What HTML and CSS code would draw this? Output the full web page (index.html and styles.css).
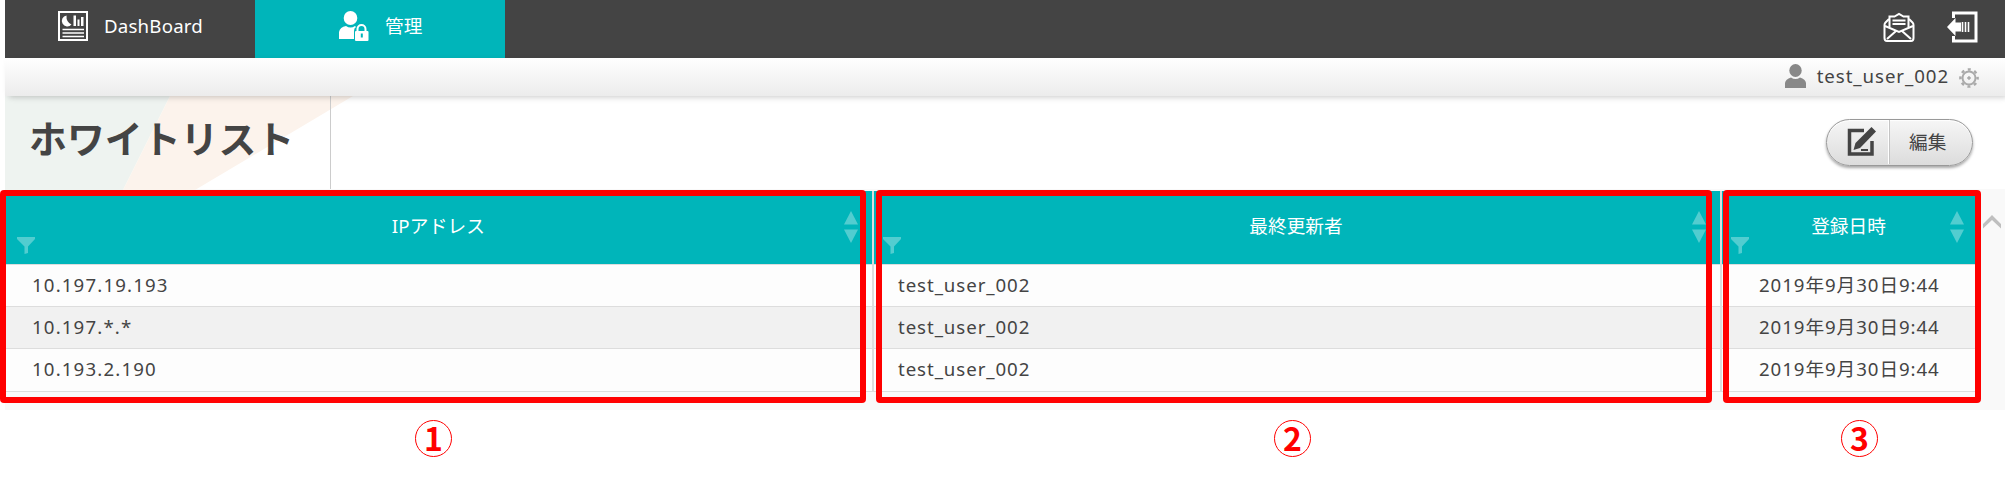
FILE: index.html
```
<!DOCTYPE html>
<html lang="ja">
<head>
<meta charset="utf-8">
<title>ホワイトリスト</title>
<link rel="stylesheet" href="styles.css">
</head>
<body>
<svg class="defs" width="0" height="0">
  <symbol id="funnel" viewBox="0 0 18 18"><path d="M0 0H18V2L11 9.500V16L7.500 17V9.500L0 2Z"/></symbol>
  <symbol id="sort" viewBox="0 0 14 32"><path d="M7 0L14 13.500H0ZM0 18.500H14L7 32Z"/></symbol>
</svg>
<div class="app">
  <header class="topbar">
    <nav class="nav">
      <a class="tab">
        <svg class="tab-icon" viewBox="0 0 30 30"><rect x="1" y="1" width="28" height="28" fill="none" stroke="#fff" stroke-width="2"/><path d="M8.500 4.500A5.500 5.500 0 1 0 13.500 13.500Q8 11 8.500 4.500ZM15.500 4.500h2.500v10.500h-2.500zM19.500 8.500h2v6.500h-2zM23 6h2.500v9h-2.500z" fill="#fff"/><path d="M4.500 18.500H26M4.500 22H26M4.500 25.500H26" stroke="#fff" stroke-width="1.600"/></svg>
        <span class="dash">DashBoard</span>
      </a>
      <a class="tab active">
        <svg class="tab-icon" viewBox="0 0 30 30" fill="#fff"><ellipse cx="11.500" cy="7" rx="6.800" ry="7"/><path d="M0 28V21Q1 16 7 15Q11.500 18 16 15L17 16Q15 17 15 20V28Z"/><path d="M18.500 21V18a4 4 0 0 1 8 0V21" fill="none" stroke="#fff" stroke-width="2"/><rect x="16" y="20" width="13.500" height="10" rx="1"/><rect x="21.800" y="22.500" width="2" height="4" fill="#00b5ba"/></svg>
        <span>管理</span>
      </a>
    </nav>
    <div class="actions">
      <svg width="32" height="31" viewBox="0 0 32 31" fill="none" stroke="#fff" stroke-width="2"><path d="M6 8L2.500 11.500Q1.500 12.500 1.500 14V27Q1.500 30 4 30H28Q30.500 30 30.500 27V14Q30.500 12.500 29.500 11.500L26 8"/><path d="M6.500 16V5.500H11.500L16 3L20.500 5.500H25.500V16"/><path d="M9.500 9.500H22.500M9.500 13H22.500" stroke-width="1.800"/><path d="M2 15L16 21L30 15M4 28L13 20M28 28L19 20"/></svg>
      <svg width="31" height="32" viewBox="0 0 31 32" fill="none" stroke="#fff"><path d="M6.500 7V2H29V30H6.500V25" stroke-width="3"/><path d="M0 16L8.500 7V11.500H14V20.500H8.500V25Z" fill="#fff" stroke="none"/><path d="M15.500 11V21M18.500 11V21M21.500 11V21" stroke-width="1.600"/></svg>
    </div>
  </header>
  <div class="userbar">
    <svg width="21" height="24" viewBox="0 0 21 24" fill="#888"><ellipse cx="10.500" cy="6.500" rx="6.200" ry="6.500"/><path d="M0 24V19Q.5 15 6 13.500Q10.500 16.500 15 13.500Q20.500 15 21 19V24Z"/></svg>
    <span class="user">test_user_002</span>
    <svg class="gear" width="20" height="20" viewBox="0 0 20 20" fill="none" stroke="#aaa"><circle cx="10" cy="10" r="6.500" stroke-width="2"/><circle cx="10" cy="10" r="8.600" stroke-width="2.500" stroke-dasharray="3 3.754" stroke-dashoffset="1.500"/><circle cx="10" cy="10" r="1.300" fill="#aaa"/></svg>
  </div>
  <section class="titlebar">
    <svg class="title-art" width="360" height="94" viewBox="0 0 360 94"><path d="M0 0H165L118 94H0Z" fill="#eef3f0"/><path d="M165 0H348L190 94H118Z" fill="#fcf3ec"/></svg>
    <h1>ホワイトリスト</h1>
    <button class="edit">
      <span class="edit-icon"><svg width="30" height="30" viewBox="0 0 30 30"><path d="M17 3.500H2.500V27H25V14" fill="none" stroke="#444" stroke-width="3.500"/><path d="M24.500 0L29 4.500L13 21L6.500 23L8.500 16Z" fill="#444"/><path d="M14 23H21" stroke="#444" stroke-width="2"/></svg></span>
      <span class="edit-label">編集</span>
    </button>
  </section>
  <div class="grid-area">
    <div class="grid">
      <div class="row head">
        <div class="cell">IPアドレス<svg class="funnel"><use href="#funnel"/></svg><svg class="sort"><use href="#sort"/></svg></div>
        <div class="cell">最終更新者<svg class="funnel"><use href="#funnel"/></svg><svg class="sort"><use href="#sort"/></svg></div>
        <div class="cell">登録日時<svg class="funnel"><use href="#funnel"/></svg><svg class="sort"><use href="#sort"/></svg></div>
      </div>
      <div class="row"><div class="cell ip">10.197.19.193</div><div class="cell">test_user_002</div><div class="cell date">2019年9月30日9:44</div></div>
      <div class="row alt"><div class="cell ip">10.197.*.*</div><div class="cell">test_user_002</div><div class="cell date">2019年9月30日9:44</div></div>
      <div class="row"><div class="cell ip">10.193.2.190</div><div class="cell">test_user_002</div><div class="cell date">2019年9月30日9:44</div></div>
    </div>
    <svg class="scroll-up" width="18" height="16" viewBox="0 0 18 16"><path d="M0 14.500V10L9 1L18 10V14.500L9 6Z" fill="#bfbfbf"/></svg>
  </div>
</div>
<div class="callout one"><span class="number">1</span></div>
<div class="callout two"><span class="number">2</span></div>
<div class="callout three"><span class="number">3</span></div>
</body>
</html>
```
FILE: styles.css
```
* { box-sizing: border-box; }
body { margin: 0; height: 486px; overflow: hidden; position: relative; background: #fff; color: #444; font: 18.67px/24px "Noto Sans", "Noto Sans CJK JP", sans-serif; }
.defs { position: absolute; }
.app { margin-left: 5px; }
.dash { letter-spacing: .2px; }
.topbar { height: 58px; background: #444; display: flex; justify-content: space-between; }
.nav { display: flex; }
.tab { width: 250px; height: 58px; padding: 11px 0 0 53px; display: flex; gap: 16px; color: #fff; line-height: 30px; }
.tab.active { background: #00b5ba; padding-left: 84px; }
.tab-icon { width: 30px; height: 30px; flex: none; }
.actions { display: flex; gap: 32px; padding: 11px 27px 0 0; }
.userbar { height: 38px; display: flex; align-items: flex-start; padding: 6px 26px 0 0; justify-content: flex-end; background: linear-gradient(#fff, #ececec); box-shadow: 3px 2px 6px -1px rgba(0,0,0,.22); position: relative; z-index: 1; }
.user { margin: 0 10px 0 11px; letter-spacing: .93px; }
.gear { margin-top: 4px; }
.titlebar { height: 93px; display: flex; justify-content: space-between; position: relative; }
.title-art { position: absolute; left: 0; top: 0; }
h1 { position: relative; margin: 0; width: 326px; padding: 19px 0 0 24px; border-right: 1.5px solid #ccc; font: bold 37.9px/44px "Noto Sans CJK JP", sans-serif; white-space: nowrap; }
.edit { margin: 23px 32px 0 0; width: 147px; height: 47px; padding: 0; display: flex; border: 1.5px solid #999; border-radius: 24px; background: linear-gradient(#f6f6f6, #dcdcdc); box-shadow: 0 2px 3px rgba(0,0,0,.35), inset 0 1px 1px #fff; color: #444; font: 18.67px/41px "Noto Sans CJK JP", sans-serif; }
.edit-icon { width: 62px; height: 44px; padding: 7px 12px 0 20px; border-right: 1px solid #fff; box-shadow: 1px 0 #c4c4c4; line-height: 0; text-align: left; }
.edit-icon svg { display: block; margin-left: 0; flex: none; }
.edit-label { padding-left: 20px; }
.grid-area { height: 221px; background: #f9f9f9; display: flex; }
.grid { width: 1972px; padding-top: 2px; }
.row { display: grid; grid-template-columns: 869px 848px 255px; height: 42px; background: #fdfdfd; border-bottom: 1.5px solid #ddd; }
.row:nth-child(n+3) { height: 42.3px; }
.row.alt { background: #f1f1f1; }
.cell { padding: 8px 0 0 27px; border-right: 2px solid #ddd; letter-spacing: .93px; }
.cell.ip { letter-spacing: 1.15px; }
.cell:nth-child(2) { padding-left: 24px; }
.cell.date { padding-left: 37px; }
.cell:last-child { border-right: 0; }
.row.head { height: 74px; background: #00b5ba; color: #fff; }
.head .cell, .head .cell:nth-child(2) { position: relative; padding: 23px 2px 0 0; text-align: center; letter-spacing: 0; }
.head .cell:first-child { padding-right: 0; letter-spacing: .2px; }
.funnel { position: absolute; left: 12px; top: 46px; width: 18px; height: 18px; fill: #52cdd0; }
.cell + .cell .funnel { left: 9px; }
.sort { position: absolute; right: 14px; top: 20px; width: 14px; height: 32px; fill: #52cdd0; }
.cell:last-child .sort { right: 13px; }
.scroll-up { margin: 25px 0 0 6px; }
.callout { position: absolute; top: 190px; height: 213px; border: 6px solid #f00; border-radius: 4px; }
.one { left: 0; width: 866px; }
.two { left: 876px; width: 836px; }
.three { left: 1723px; width: 258px; }
.number { position: absolute; left: 50%; top: 224px; width: 37px; height: 37px; margin-left: -18px; border: 1.5px solid #f00; border-radius: 50%; text-align: center; color: #f00; font: bold 32px/33px "Noto Sans CJK JP", sans-serif; }
.two .number { margin-left: -20px; }
.three .number { margin-left: -11px; }
```
